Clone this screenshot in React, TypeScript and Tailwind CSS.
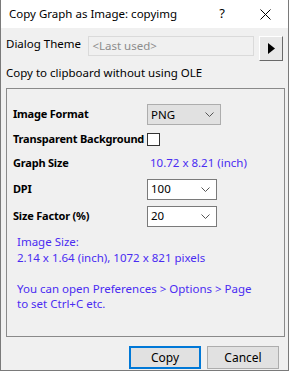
import React from 'react';

const ui = { fontFamily: '"Noto Sans", "Open Sans", Arial, sans-serif' };

function Combo({ value, gray }: { value: string; gray?: boolean }) {
  return (
    <div
      className={`flex h-[21px] items-center justify-between pl-[3px] pr-[6px] text-[11.5px] text-black ${
        gray ? 'w-[74px] border border-[#adadad] bg-[#e1e1e1]' : 'w-[70px] border border-[#7a7a7a] bg-white'
      }`}
    >
      <span>{value}</span>
      <svg width="9" height="6" viewBox="0 0 9 6" className="mt-[1px]">
        <path d="M0.5 0.5 L4.5 4.5 L8.5 0.5" fill="none" stroke="#555" strokeWidth="1" />
      </svg>
    </div>
  );
}

function Label({ children, w = 'w-[140px]' }: { children: React.ReactNode; w?: string }) {
  return (
    <span className={`${w} whitespace-nowrap pl-[6px] text-[11px] font-bold tracking-[-0.2px]`}>
      {children}
    </span>
  );
}

export default function App() {
  return (
    <div className="h-[372px] w-[290px] overflow-hidden bg-white" style={ui}>
      {/* Window */}
      <div className="flex h-[371px] w-[289px] flex-col border-x border-b border-[#7a7a7a]">
        {/* Title bar */}
        <div className="flex h-[28px] shrink-0 items-center bg-white text-[11.5px] text-black">
          <span className="pl-[8px]">Copy Graph as Image: copyimg</span>
          <span className="ml-auto mr-[35px] text-[13px]">?</span>
          <svg width="11" height="11" viewBox="0 0 11 11" className="mr-[17px]">
            <path d="M0.5 0.5 L10.5 10.5 M10.5 0.5 L0.5 10.5" stroke="#000" strokeWidth="1" />
          </svg>
        </div>

        {/* Body */}
        <div className="flex flex-1 flex-col bg-[#f0f0f0] px-[5px] text-[11.5px] text-black">
          {/* Dialog Theme */}
          <div className="mt-[8px] flex items-start">
            <span className="w-[83px] leading-[16px]">Dialog Theme</span>
            <div className="flex h-[20px] w-[167px] items-center border border-[#dadada] bg-[#f0f0f0] pl-[3px] text-[#8c8c8c]">
              &lt;Last used&gt;
            </div>
            <button className="ml-[5px] flex h-[25px] w-[24px] items-center justify-center border border-t-white border-l-white border-r-[#696969] border-b-[#696969] bg-[#e8e8e8]">
              <svg width="7" height="11" viewBox="0 0 7 11">
                <path d="M0 0 L7 5.5 L0 11 Z" fill="#000" />
              </svg>
            </button>
          </div>

          <div className="mt-[4px] leading-[16px]">Copy to clipboard without using OLE</div>

          {/* Group box */}
          <div className="mt-[7px] flex h-[249px] w-[279px] flex-col border border-[#8a8a8a] pt-[15px]">
            <div className="flex h-[21px] items-center">
              <Label>Image Format</Label>
              <Combo value="PNG" gray />
            </div>
            <div className="flex h-[28px] items-center">
              <Label>Transparent Background</Label>
              <div className="h-[13px] w-[13px] border border-[#333] bg-white" />
            </div>
            <div className="flex h-[20px] items-center">
              <Label w="w-[143px]">Graph Size</Label>
              <span className="text-[#4a2cf2]">10.72 x 8.21 (inch)</span>
            </div>
            <div className="flex h-[32px] items-center">
              <Label>DPI</Label>
              <Combo value="100" />
            </div>
            <div className="flex h-[22px] items-center">
              <Label>Size Factor (%)</Label>
              <Combo value="20" />
            </div>
            <div className="mt-[7px] pl-[10px] leading-[15.5px] text-[#4a2cf2]">
              <div>Image Size:</div>
              <div>2.14 x 1.64 (inch), 1072 x 821 pixels</div>
              <div className="h-[15.5px]" />
              <div>You can open Preferences &gt; Options &gt; Page</div>
              <div>to set Ctrl+C etc.</div>
            </div>
          </div>

          {/* Buttons */}
          <div className="mt-[9px] flex justify-end gap-[6px] pr-[4px]">
            <button className="flex h-[23px] w-[72px] items-center justify-center border-2 border-[#0078d7] bg-[#e1e1e1] text-[12px]">
              Copy
            </button>
            <button className="flex h-[23px] w-[72px] items-center justify-center border border-[#adadad] bg-[#e1e1e1] text-[12px]">
              Cancel
            </button>
          </div>
        </div>
      </div>
    </div>
  );
}
